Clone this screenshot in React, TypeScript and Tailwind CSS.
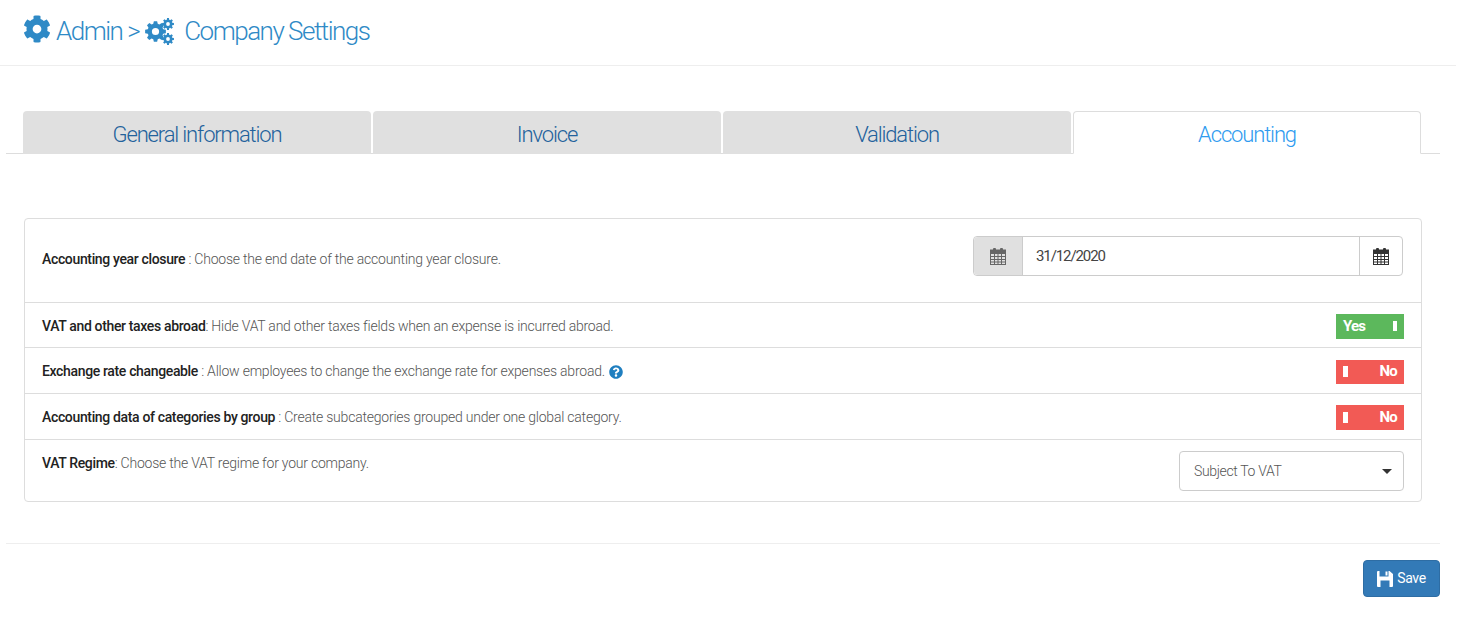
import { FaCog, FaQuestionCircle } from "react-icons/fa";

const tabs = ["General information", "Invoice", "Validation"];

function gear(cx: number, cy: number, R: number, r: number, hole: number, teeth: number) {
  const pts: string[] = [];
  const step = (Math.PI * 2) / teeth;
  for (let i = 0; i < teeth; i++) {
    const a = i * step;
    const p = (rad: number, ang: number) =>
      `${(cx + rad * Math.cos(ang)).toFixed(2)} ${(cy + rad * Math.sin(ang)).toFixed(2)}`;
    pts.push(p(r, a - step * 0.36), p(R, a - step * 0.2), p(R, a + step * 0.2), p(r, a + step * 0.36));
  }
  return `M${pts.join("L")}Z M${cx - hole} ${cy}a${hole} ${hole} 0 1 0 ${hole * 2} 0a${hole} ${hole} 0 1 0 ${-hole * 2} 0Z`;
}

function CogsIcon() {
  return (
    <svg width="29" height="28" viewBox="0 0 29 28" fill="currentColor" className="ml-[6px] mr-[10px] mt-[-2px]">
      <path fillRule="evenodd" d={gear(10.5, 14.5, 10.5, 8, 3.6, 8)} />
      <path fillRule="evenodd" d={gear(23, 7, 6, 4.4, 1.9, 8)} />
      <path fillRule="evenodd" d={gear(23, 22, 6, 4.4, 1.9, 8)} />
    </svg>
  );
}

function CalendarIcon({ solid }: { solid?: boolean }) {
  const color = solid ? "#333" : "#666";
  return (
    <svg width="16" height="17" viewBox="0 0 16 17">
      <rect x="3" y="0" width="3" height="4" rx="1" fill={color} />
      <rect x="10" y="0" width="3" height="4" rx="1" fill={color} />
      <rect x="0.5" y="2" width="15" height="4" fill={color} />
      <rect x="0.5" y="2" width="15" height="14.5" fill="none" stroke={color} />
      {[8.5, 11.5, 14].map((y) => (
        <rect key={y} x="1" y={y - 0.5} width="14" height="1" fill={color} />
      ))}
      {[4.5, 8, 11.5].map((x) => (
        <rect key={x} x={x - 0.5} y="6" width="1" height="10" fill={color} />
      ))}
    </svg>
  );
}

function SaveIcon() {
  return (
    <svg width="16" height="16" viewBox="0 0 16 16" fill="currentColor">
      <path
        fillRule="evenodd"
        d="M0 1a1 1 0 0 1 1-1h1.5v5.5h9V0h1L16 3v12a1 1 0 0 1-1 1H1a1 1 0 0 1-1-1ZM3.5 9.5V16h9V9.5ZM8.5 0.5h2v4h-2Z"
      />
    </svg>
  );
}

function Toggle({ on, h }: { on: boolean; h: string }) {
  return (
    <div
      className={`flex items-center justify-between w-[68px] px-[7px] text-[15px] font-bold tracking-[-0.8px] text-white ${h} ${
        on ? "bg-[#5cb85c]" : "bg-[#f25a55]"
      }`}
    >
      {on ? (
        <>
          <span>Yes</span>
          <span className="w-[4px] h-[10px] bg-white" />
        </>
      ) : (
        <>
          <span className="w-[5px] h-[11px] bg-white" />
          <span>No</span>
        </>
      )}
    </div>
  );
}

function Row({
  title,
  sep,
  desc,
  on,
  help,
  h,
  toggleH,
}: {
  title: string;
  sep: string;
  desc: string;
  on: boolean;
  help?: boolean;
  h: string;
  toggleH: string;
}) {
  return (
    <div className={`flex items-center justify-between pt-[2px] pl-[17px] pr-[17px] border-t border-[#ddd] ${h}`}>
      <p className="flex items-center">
        <b className="font-medium text-[#222]">{title}</b>
        <span className="whitespace-pre tracking-[-0.22px]">
          {sep}
          {desc}
        </span>
        {help && <FaQuestionCircle className="ml-[4px] text-[14px] text-[#1f7fc0]" />}
      </p>
      <Toggle on={on} h={toggleH} />
    </div>
  );
}

export default function App() {
  return (
    <div className="min-h-[629px] bg-white text-[14px] text-[#555] font-['Roboto',sans-serif] font-light tracking-[-0.35px]">
      <header className="flex items-center h-[66px] pl-[23px] pb-[2px] border-b border-[#eee] text-[26px] tracking-[-1.5px] text-[#2f8ac6] mr-[10px]">
        <FaCog className="text-[28px] mr-[5px] mb-[6px]" />
        <span>Admin &gt;</span>
        <CogsIcon />
        <span>Company Settings</span>
      </header>

      <div className="mx-[6px] w-[1434px] mt-[45px] border-b border-[#ddd] pl-[17px] flex gap-[2px] h-[43px]">
        {tabs.map((t) => (
          <div
            key={t}
            className="flex items-center justify-center w-[348px] h-[43px] pt-[3px] rounded-t-[4px] bg-[#e0e0e0] text-[22px] tracking-[-1.15px] text-[#23629c]"
          >
            {t}
          </div>
        ))}
        <div className="flex items-center justify-center w-[348px] h-[43px] pt-[3px] rounded-t-[4px] bg-white border border-[#ddd] border-b-white text-[22px] tracking-[-1.15px] text-[#2e9bef]">
          Accounting
        </div>
      </div>

      <section className="ml-[24px] mt-[64px] w-[1398px] border border-[#ddd] rounded-[4px]">
        <div className="flex justify-between h-[83px] pl-[17px] pr-[18px]">
          <p className="self-center mb-[3px]">
            <b className="font-medium text-[#222]">Accounting year closure</b>
            <span className="tracking-[-0.22px]"> : Choose the end date of the accounting year closure.</span>
          </p>
          <div className="flex self-start mt-[17px] w-[430px] h-[40px] border border-[#ccc] rounded-[4px] text-[#444]">
            <div className="flex items-center justify-center w-[49px] bg-[#e0e0e0] rounded-l-[4px] border-r border-[#ccc]">
              <CalendarIcon />
            </div>
            <div className="flex items-center flex-1 pl-[13px] pt-[1px] text-[15px] font-normal tracking-[-1.1px]">31/12/2020</div>
            <div className="flex items-center justify-center w-[43px] border-l border-[#ccc]">
              <CalendarIcon solid />
            </div>
          </div>
        </div>
        <Row h="h-[45px]" toggleH="h-[25px]" title="VAT and other taxes abroad" sep=": " desc="Hide VAT and other taxes fields when an expense is incurred abroad." on />
        <Row h="h-[46px]" toggleH="h-[24px]" title="Exchange rate changeable" sep=" : " desc="Allow employees to change the exchange rate for expenses abroad." on={false} help />
        <Row h="h-[46px]" toggleH="h-[25px]" title="Accounting data of categories by group" sep=" : " desc="Create subcategories grouped under one global category." on={false} />
        <div className="flex justify-between h-[62px] pl-[17px] pr-[17px] pt-[11px] border-t border-[#ddd]">
          <p className="mt-[2px]">
            <b className="font-medium text-[#222]">VAT Regime</b>
            <span className="tracking-[-0.22px]">: Choose the VAT regime for your company.</span>
          </p>
          <div className="relative flex items-center w-[225px] h-[40px] pl-[14px] border border-[#ccc] rounded-[4px]">
            Subject To VAT
            <span className="absolute right-[11px] top-[17px] border-x-[5px] border-x-transparent border-t-[5px] border-t-[#333]" />
          </div>
        </div>
      </section>

      <div className="mx-[6px] w-[1434px] mt-[41px] border-t border-[#eee] flex justify-end pt-[16px]">
        <button className="flex items-center justify-center gap-[4px] w-[77px] h-[37px] rounded-[4px] bg-[#337ab7] border border-[#2e6da4] text-white text-[14px] font-normal">
          <SaveIcon />
          Save
        </button>
      </div>
    </div>
  );
}
